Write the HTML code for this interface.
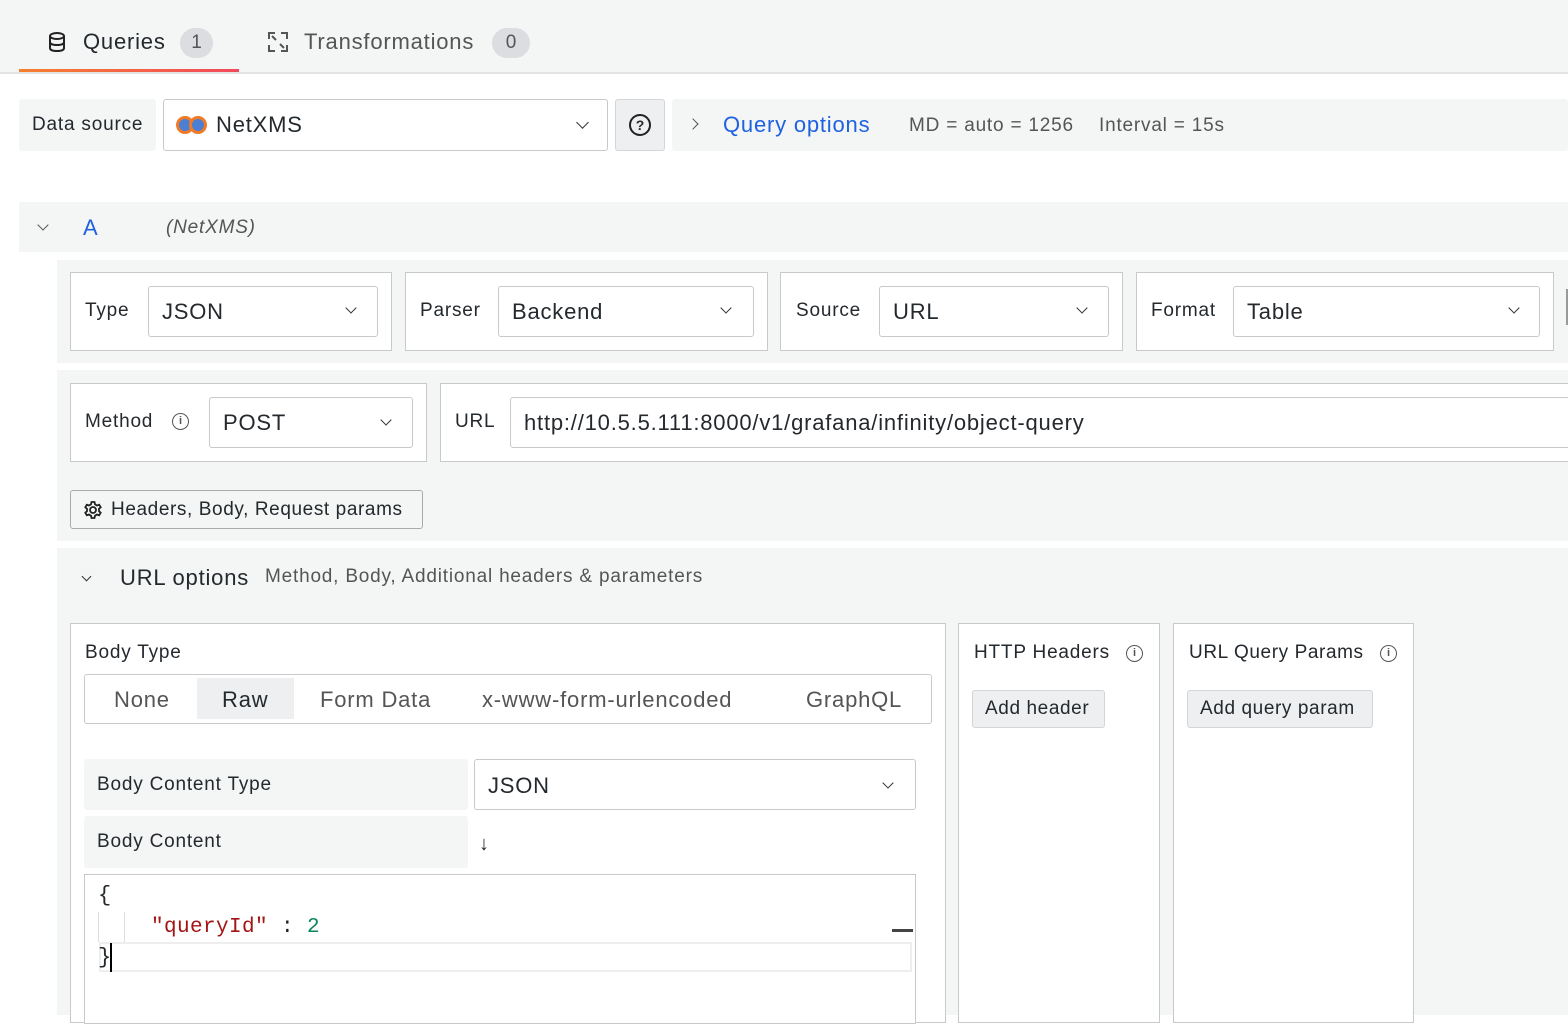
<!DOCTYPE html>
<html><head><meta charset="utf-8"><style>
*{box-sizing:border-box;margin:0;padding:0}
body{width:1568px;height:1015px;overflow:hidden;background:#fff;font-family:"Liberation Sans",sans-serif;color:#24292e;position:relative}
.a{position:absolute}
.g{background:#f4f5f5}
.box{position:absolute;background:#fff;border:1px solid #c8c9cc}
.in{position:absolute;background:#fff;border:1px solid #c8c9cc;border-radius:3px}
.t{position:absolute;white-space:nowrap;letter-spacing:0.8px;margin-top:1px}
.m{letter-spacing:0.4px}
.chev{position:absolute;width:9px;height:9px;border-right:1.8px solid #333;border-bottom:1.8px solid #333;transform:rotate(45deg)}
.info{position:absolute;width:17px;height:17px;border:1.5px solid #555;border-radius:50%;font-size:11px;text-align:center;line-height:14px;font-weight:bold;color:#555}
</style></head><body>
<div class="a g" style="left:0;top:0;width:1568px;height:72px"></div>
<div class="a" style="left:0;top:72px;width:1568px;height:2px;background:#e2e3e5"></div>
<div class="a" style="left:19px;top:69px;width:220px;height:3px;background:linear-gradient(90deg,#f67f2e,#f2495c)"></div>
<svg class="a" style="left:47px;top:31px" width="20" height="22" viewBox="0 0 20 22"><ellipse cx="10" cy="5" rx="7" ry="3" fill="none" stroke="#222" stroke-width="2"/><path d="M3 5v12c0 2 3 3 7 3s7-1 7-3V5M3 11c0 2 3 3 7 3s7-1 7-3" fill="none" stroke="#222" stroke-width="2"/></svg>
<div class="t" style="left:83px;top:28px;font-size:22px">Queries</div>
<div class="a" style="left:180px;top:28px;width:33px;height:30px;border-radius:15px;background:#dcdde0;font-size:19px;text-align:center;line-height:30px;color:#555">1</div>
<svg class="a" style="left:267px;top:31px" width="22" height="22" viewBox="0 0 22 22" fill="none" stroke="#555" stroke-width="2"><path d="M2 8V2h6M14 2h6v6M20 14v6h-6M8 20H2v-6M5 5l4 4M17 17l-4-4"/></svg>
<div class="t" style="left:304px;top:28px;font-size:22px;color:#555">Transformations</div>
<div class="a" style="left:492px;top:28px;width:38px;height:30px;border-radius:15px;background:#dcdde0;font-size:19px;text-align:center;line-height:30px;color:#555">0</div>

<div class="a g" style="left:19px;top:99px;width:137px;height:52px;border-radius:3px"></div>
<div class="t" style="left:32px;top:113px;font-size:19px">Data source</div>
<div class="in" style="left:163px;top:99px;width:445px;height:52px"></div>
<div class="a" style="left:176px;top:116px;width:18px;height:18px;border-radius:50%;background:#4a7fd4;border:3px solid #f07a25"></div>
<div class="a" style="left:189px;top:116px;width:18px;height:18px;border-radius:50%;background:#4a7fd4;border:3px solid #f07a25"></div>
<div class="t" style="left:216px;top:111px;font-size:22px">NetXMS</div>
<div class="chev" style="left:578px;top:118px"></div>
<div class="a" style="left:615px;top:99px;width:50px;height:52px;background:#eeeff0;border:1px solid #d4d5d8;border-radius:3px"></div>
<div class="a" style="left:629px;top:114px;width:22px;height:22px;border:2px solid #222;border-radius:50%;font-size:14px;font-weight:bold;text-align:center;line-height:18px">?</div>
<div class="a g" style="left:672px;top:99px;width:896px;height:52px;border-radius:3px"></div>
<div class="chev" style="left:689px;top:120px;transform:rotate(-45deg);width:8px;height:8px;border-color:#555"></div>
<div class="t" style="left:723px;top:111px;font-size:22px;color:#1f62e0">Query options</div>
<div class="t" style="left:909px;top:114px;font-size:19px;color:#555">MD = auto = 1256</div>
<div class="t" style="left:1099px;top:114px;font-size:19px;color:#555">Interval = 15s</div>

<div class="a g" style="left:19px;top:202px;width:1549px;height:50px"></div>
<div class="chev" style="left:39px;top:221px;width:8px;height:8px;border-color:#555"></div>
<div class="t" style="left:83px;top:214px;font-size:22px;color:#1f62e0">A</div>
<div class="t" style="left:166px;top:216px;font-size:19px;font-style:italic;color:#555">(NetXMS)</div>

<div class="a g" style="left:57px;top:260px;width:1511px;height:103px"></div>
<div class="box" style="left:70px;top:272px;width:322px;height:79px"></div>
<div class="t" style="left:85px;top:299px;font-size:19px">Type</div>
<div class="in" style="left:148px;top:286px;width:230px;height:51px"></div>
<div class="t" style="left:162px;top:298px;font-size:22px">JSON</div>
<div class="chev" style="left:347px;top:304px;width:8px;height:8px"></div>
<div class="box" style="left:405px;top:272px;width:363px;height:79px"></div>
<div class="t" style="left:420px;top:299px;font-size:19px">Parser</div>
<div class="in" style="left:498px;top:286px;width:256px;height:51px"></div>
<div class="t" style="left:512px;top:298px;font-size:22px">Backend</div>
<div class="chev" style="left:722px;top:304px;width:8px;height:8px"></div>
<div class="box" style="left:780px;top:272px;width:343px;height:79px"></div>
<div class="t" style="left:796px;top:299px;font-size:19px">Source</div>
<div class="in" style="left:879px;top:286px;width:230px;height:51px"></div>
<div class="t" style="left:893px;top:298px;font-size:22px">URL</div>
<div class="chev" style="left:1078px;top:304px;width:8px;height:8px"></div>
<div class="box" style="left:1136px;top:272px;width:418px;height:79px"></div>
<div class="t" style="left:1151px;top:299px;font-size:19px">Format</div>
<div class="in" style="left:1233px;top:286px;width:307px;height:51px"></div>
<div class="t" style="left:1247px;top:298px;font-size:22px">Table</div>
<div class="chev" style="left:1510px;top:304px;width:8px;height:8px"></div>
<div class="a" style="left:1566px;top:289px;width:2px;height:36px;background:#999"></div>

<div class="a g" style="left:57px;top:370px;width:1511px;height:171px"></div>
<div class="box" style="left:70px;top:383px;width:357px;height:79px"></div>
<div class="t" style="left:85px;top:410px;font-size:19px">Method</div>
<div class="info" style="left:172px;top:413px">i</div>
<div class="in" style="left:209px;top:397px;width:204px;height:51px"></div>
<div class="t" style="left:223px;top:409px;font-size:22px">POST</div>
<div class="chev" style="left:382px;top:416px;width:8px;height:8px"></div>
<div class="box" style="left:440px;top:383px;width:1140px;height:79px"></div>
<div class="t" style="left:455px;top:410px;font-size:19px">URL</div>
<div class="in" style="left:510px;top:397px;width:1070px;height:51px"></div>
<div class="t" style="left:524px;top:409px;font-size:22px">http://10.5.5.111:8000/v1/grafana/infinity/object-query</div>
<div class="a" style="left:70px;top:490px;width:353px;height:39px;background:#f4f5f5;border:1px solid #aaa;border-radius:3px"></div>
<svg class="a" style="left:83px;top:500px" width="20" height="20" viewBox="0 0 20 20" fill="none" stroke="#222" stroke-width="1.8"><circle cx="10" cy="10" r="3"/><path d="M8.5 2h3l.5 2.3 2 1.2 2.2-.8 1.5 2.6-1.7 1.5v2.4l1.7 1.5-1.5 2.6-2.2-.8-2 1.2-.5 2.3h-3l-.5-2.3-2-1.2-2.2.8-1.5-2.6 1.7-1.5V8.8L2.3 7.3l1.5-2.6 2.2.8 2-1.2z"/></svg>
<div class="t" style="left:111px;top:498px;font-size:19px;letter-spacing:0.6px">Headers, Body, Request params</div>

<div class="a g" style="left:57px;top:548px;width:1511px;height:467px"></div>
<div class="chev" style="left:83px;top:573px;width:7px;height:7px"></div>
<div class="t" style="left:120px;top:564px;font-size:22px">URL options</div>
<div class="t" style="left:265px;top:565px;font-size:19px;color:#555">Method, Body, Additional headers &amp; parameters</div>

<div class="box" style="left:70px;top:623px;width:876px;height:400px"></div>
<div class="t" style="left:85px;top:641px;font-size:19px">Body Type</div>
<div class="a" style="left:84px;top:674px;width:848px;height:50px;border:1px solid #c8c9cc;border-radius:3px;background:#fff"></div>
<div class="a" style="left:197px;top:678px;width:97px;height:41px;background:#eeeff0"></div>
<div class="t" style="left:114px;top:686px;font-size:22px;color:#555">None</div>
<div class="t" style="left:222px;top:686px;font-size:22px">Raw</div>
<div class="t" style="left:320px;top:686px;font-size:22px;color:#555">Form Data</div>
<div class="t" style="left:482px;top:686px;font-size:22px;color:#555">x-www-form-urlencoded</div>
<div class="t" style="left:806px;top:686px;font-size:22px;color:#555">GraphQL</div>

<div class="a g" style="left:84px;top:759px;width:384px;height:51px;border-radius:3px"></div>
<div class="t" style="left:97px;top:773px;font-size:19px">Body Content Type</div>
<div class="in" style="left:474px;top:759px;width:442px;height:51px"></div>
<div class="t" style="left:488px;top:772px;font-size:22px">JSON</div>
<div class="chev" style="left:884px;top:779px;width:8px;height:8px"></div>
<div class="a g" style="left:84px;top:816px;width:384px;height:52px;border-radius:3px"></div>
<div class="t" style="left:97px;top:830px;font-size:19px">Body Content</div>
<div class="t" style="left:479px;top:832px;font-size:20px;font-weight:bold">↓</div>
<div class="a" style="left:84px;top:874px;width:832px;height:150px;border:1px solid #c8c9cc;background:#fff"></div>
<div class="t m" style="left:98px;top:882px;font-size:22px;font-family:'Liberation Mono',monospace">{</div>
<div class="a" style="left:98px;top:912px;width:1px;height:30px;background:#ddd"></div>
<div class="a" style="left:124px;top:912px;width:1px;height:30px;background:#ddd"></div>
<div class="t m" style="left:151px;top:915px;font-size:21px;font-family:'Liberation Mono',monospace;color:#a31515">"queryId"<span style="color:#222"> : </span><span style="color:#098658">2</span></div>
<div class="a" style="left:892px;top:929px;width:21px;height:3px;background:#444"></div>
<div class="a" style="left:99px;top:942px;width:813px;height:30px;border:2px solid #eee"></div>
<div class="t m" style="left:98px;top:944px;font-size:22px;font-family:'Liberation Mono',monospace">}</div>
<div class="a" style="left:110px;top:943px;width:2px;height:29px;background:#000"></div>

<div class="box" style="left:958px;top:623px;width:202px;height:400px"></div>
<div class="t" style="left:974px;top:641px;font-size:19px">HTTP Headers</div>
<div class="info" style="left:1126px;top:645px">i</div>
<div class="a" style="left:972px;top:690px;width:133px;height:38px;background:#eeeff0;border:1px solid #d4d5d8;border-radius:3px"></div>
<div class="t" style="left:985px;top:697px;font-size:19px;letter-spacing:0.6px">Add header</div>
<div class="box" style="left:1173px;top:623px;width:241px;height:400px"></div>
<div class="t" style="left:1189px;top:641px;font-size:19px;letter-spacing:0.6px">URL Query Params</div>
<div class="info" style="left:1380px;top:645px">i</div>
<div class="a" style="left:1187px;top:690px;width:186px;height:38px;background:#eeeff0;border:1px solid #d4d5d8;border-radius:3px"></div>
<div class="t" style="left:1200px;top:697px;font-size:19px;letter-spacing:0.6px">Add query param</div>
</body></html>
